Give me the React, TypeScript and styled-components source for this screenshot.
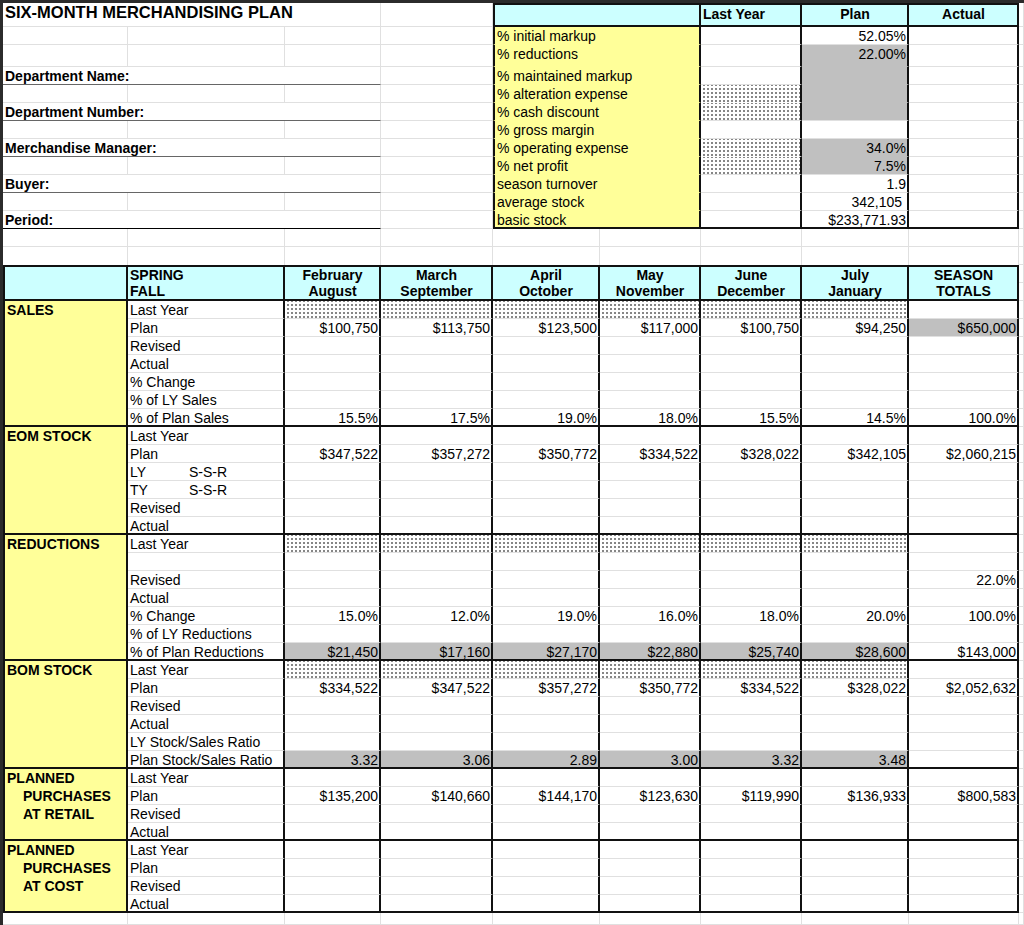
import React from "react";
import styled, { createGlobalStyle } from "styled-components";

const Global = createGlobalStyle`
  html, body { margin: 0; padding: 0; background: #fff; }
  body { font-family: "Liberation Sans", Arial, sans-serif; font-size: 14px; color: #000; }
`;

const GRID = "#e0e0e0";
const THICK = "2px solid #111";
const CYAN = "#ccffff";
const YELLOW = "#ffff99";
const GRAY = "#c0c0c0";

const COLS = [125, 157, 96, 112, 107, 101, 101, 107, 110];
const ROWS: number[] = [24, 18, 22, ...Array(9).fill(18), 18, 18, 18, 18, ...Array(34).fill(18), 12];

const Frame = styled.div`
  border-top: 3px solid #2b2b2b;
  border-left: 3px solid #2b2b2b;
  width: 1021px;
  height: 922px;
  overflow: hidden;
`;

const Sheet = styled.div`
  display: grid;
  grid-template-columns: ${COLS.map((c) => c + "px").join(" ")} 1fr;
  grid-template-rows: ${ROWS.map((r) => r + "px").join(" ")};
`;

type CP = {
  $r: number; $c: number; $rs?: number; $cs?: number;
  $bg?: string; $align?: string; $bold?: boolean; $size?: number;
  $bt?: string; $bb?: string; $bl?: string; $br?: string; $stip?: boolean; $tall?: boolean;
};

const Cell = styled.div<CP>`
  box-sizing: border-box;
  grid-row: ${(p) => p.$r + 1} / span ${(p) => p.$rs || 1};
  grid-column: ${(p) => p.$c + 1} / span ${(p) => p.$cs || 1};
  border-right: ${(p) => p.$br || `1px solid ${GRID}`};
  border-bottom: ${(p) => p.$bb || `1px solid ${GRID}`};
  border-top: ${(p) => p.$bt || "none"};
  border-left: ${(p) => p.$bl || "none"};
  background-color: ${(p) => p.$bg || "transparent"};
  ${(p) => p.$stip ? `background-image: radial-gradient(circle, #000 0.55px, transparent 0.85px); background-size: 4px 4px; background-position: 1px 2px;` : ""}
  font-weight: ${(p) => (p.$bold ? 700 : 400)};
  font-size: ${(p) => p.$size || 14}px;
  text-align: ${(p) => p.$align || "left"};
  line-height: ${(p) => (p.$tall ? 16 : 18)}px;
  padding: 0 1px 0 2px;
  white-space: pre;
  overflow: hidden;
`;

const Line = styled.div<{ $indent?: number }>`
  padding-left: ${(p) => p.$indent || 0}px;
`;

const Pair = styled.span`
  display: inline-block;
  width: 59px;
`;

type Spec = Omit<CP, "$r" | "$c"> & { r: number; c: number; text?: React.ReactNode };

const cells: Spec[] = [];
const add = (s: Spec) => cells.push(s);

// ---- top section ----
add({ r: 0, c: 0, $cs: 3, text: "SIX-MONTH MERCHANDISING PLAN", $bold: true, $size: 16.5 });
const leftLabels: [number, string][] = [
  [3, "Department Name:"], [5, "Department Number:"], [7, "Merchandise Manager:"], [9, "Buyer:"], [11, "Period:"],
];
leftLabels.forEach(([r, t]) =>
  add({ r, c: 0, $cs: 3, text: t, $bold: true, $bb: r === 11 ? "1px solid #000" : "1px solid #666" })
);

add({ r: 0, c: 4, $cs: 2, $bg: CYAN, $bt: THICK, $bl: THICK, $br: THICK, $bb: THICK });
add({ r: 0, c: 6, $bg: CYAN, $bt: THICK, $br: THICK, $bb: THICK, $bold: true, text: "Last Year" });
add({ r: 0, c: 7, $bg: CYAN, $bt: THICK, $br: THICK, $bb: THICK, $bold: true, $align: "center", text: "Plan" });
add({ r: 0, c: 8, $bg: CYAN, $bt: THICK, $br: THICK, $bb: THICK, $bold: true, $align: "center", text: "Actual" });

const topLabels = [
  "% initial markup", "% reductions", "% maintained markup", "% alteration expense", "% cash discount",
  "% gross margin", "% operating expense", "% net profit", "season turnover", "average stock", "basic stock",
];
const planVals: [string, boolean][] = [
  ["52.05%", false], ["22.00%", true], ["", true], ["", true], ["", true], ["", false],
  ["34.0%", true], ["7.5%", true], ["1.9", false], ["342,105 ", false], ["$233,771.93", false],
];
const lyStip = [3, 4, 6, 7];
topLabels.forEach((t, i) => {
  const r = i + 1;
  const last = r === 11;
  const bb = last ? THICK : `1px solid ${YELLOW}`;
  add({ r, c: 4, $cs: 2, $bg: YELLOW, $bl: THICK, $br: THICK, $bb: bb, text: t });
  add({ r, c: 6, $br: THICK, $bb: last ? THICK : `1px solid ${lyStip.includes(i) && lyStip.includes(i + 1) ? "#fff" : GRID}`, $stip: lyStip.includes(i) });
  const [v, g] = planVals[i];
  add({ r, c: 7, $br: THICK, $bb: last ? THICK : `1px solid ${g && planVals[i + 1]?.[1] ? GRAY : GRID}`, $bg: g ? GRAY : undefined, $align: "right", text: v });
  add({ r, c: 8, $br: THICK, $bb: last ? THICK : undefined });
});

// ---- bottom table ----
const H = 14;
const months = [
  ["February", "August"], ["March", "September"], ["April", "October"], ["May", "November"],
  ["June", "December"], ["July", "January"], ["SEASON", "TOTALS"],
];
add({ r: H, c: 0, $rs: 2, $bg: CYAN, $bt: THICK, $bl: THICK, $br: THICK, $bb: THICK });
add({ r: H, c: 1, $rs: 2, $bg: CYAN, $bt: THICK, $br: THICK, $bb: THICK, $bold: true, $tall: true, text: "SPRING\nFALL" });
months.forEach(([a, b], i) =>
  add({ r: H, c: 2 + i, $rs: 2, $bg: CYAN, $bt: THICK, $br: THICK, $bb: THICK, $bold: true, $tall: true, $align: "center", text: `${a}\n${b}` })
);
for (let c = 0; c < 9; c++) add({ r: H - 1, c, $bb: "none" });

type RowDef = { label: React.ReactNode; vals?: string[]; stip?: boolean; gray?: boolean; grayTotal?: boolean; total?: string };
type Section = { title: React.ReactNode; rows: RowDef[] };

const v6 = (s: string) => s.split(" ");
const sections: Section[] = [
  {
    title: <Line>SALES</Line>,
    rows: [
      { label: "Last Year", stip: true },
      { label: "Plan", vals: v6("$100,750 $113,750 $123,500 $117,000 $100,750 $94,250"), total: "$650,000", grayTotal: true },
      { label: "Revised" }, { label: "Actual" }, { label: "% Change" }, { label: "% of LY Sales" },
      { label: "% of Plan Sales", vals: v6("15.5% 17.5% 19.0% 18.0% 15.5% 14.5%"), total: "100.0%" },
    ],
  },
  {
    title: <Line>EOM STOCK</Line>,
    rows: [
      { label: "Last Year" },
      { label: "Plan", vals: v6("$347,522 $357,272 $350,772 $334,522 $328,022 $342,105"), total: "$2,060,215" },
      { label: <><Pair>LY</Pair>S-S-R</> },
      { label: <><Pair>TY</Pair>S-S-R</> },
      { label: "Revised" }, { label: "Actual" },
    ],
  },
  {
    title: <Line>REDUCTIONS</Line>,
    rows: [
      { label: "Last Year", stip: true },
      { label: "" },
      { label: "Revised", total: "22.0%" },
      { label: "Actual" },
      { label: "% Change", vals: v6("15.0% 12.0% 19.0% 16.0% 18.0% 20.0%"), total: "100.0%" },
      { label: "% of LY Reductions" },
      { label: "% of Plan Reductions", vals: v6("$21,450 $17,160 $27,170 $22,880 $25,740 $28,600"), total: "$143,000", gray: true },
    ],
  },
  {
    title: <Line>BOM STOCK</Line>,
    rows: [
      { label: "Last Year", stip: true },
      { label: "Plan", vals: v6("$334,522 $347,522 $357,272 $350,772 $334,522 $328,022"), total: "$2,052,632" },
      { label: "Revised" }, { label: "Actual" }, { label: "LY Stock/Sales Ratio" },
      { label: "Plan Stock/Sales Ratio", vals: v6("3.32 3.06 2.89 3.00 3.32 3.48"), gray: true },
    ],
  },
  {
    title: <><Line>PLANNED</Line><Line $indent={16}>PURCHASES</Line><Line $indent={16}>AT RETAIL</Line></>,
    rows: [
      { label: "Last Year" },
      { label: "Plan", vals: v6("$135,200 $140,660 $144,170 $123,630 $119,990 $136,933"), total: "$800,583" },
      { label: "Revised" }, { label: "Actual" },
    ],
  },
  {
    title: <><Line>PLANNED</Line><Line $indent={16}>PURCHASES</Line><Line $indent={16}>AT COST</Line></>,
    rows: [{ label: "Last Year" }, { label: "Plan" }, { label: "Revised" }, { label: "Actual" }],
  },
];

let r = H + 2;
sections.forEach((s) => {
  const n = s.rows.length;
  add({ r, c: 0, $rs: n, $bg: YELLOW, $bl: THICK, $br: THICK, $bb: THICK, $bold: true, text: s.title });
  s.rows.forEach((row, i) => {
    const last = i === n - 1;
    const bb = last ? THICK : undefined;
    add({ r: r + i, c: 1, $br: THICK, $bb: bb, text: row.label });
    for (let k = 0; k < 6; k++) {
      add({
        r: r + i, c: 2 + k, $br: THICK, $bb: bb, $align: "right",
        $stip: row.stip, $bg: row.gray ? GRAY : undefined,
        text: row.vals ? row.vals[k] : "",
      });
    }
    add({ r: r + i, c: 8, $br: THICK, $bb: bb, $align: "right", $bg: row.grayTotal ? GRAY : undefined, text: row.total || "" });
  });
  r += n;
});

// merge specs per origin, then fill remaining grid cells so gridlines show
const byKey = new Map<string, Spec>();
cells.forEach((s) => {
  const key = `${s.r}-${s.c}`;
  const prev = byKey.get(key);
  byKey.set(key, prev ? { ...prev, ...s } : s);
});
const occupied = new Set<string>();
const final: Spec[] = [];
byKey.forEach((s) => {
  final.push(s);
  for (let i = 0; i < (s.$rs || 1); i++)
    for (let j = 0; j < (s.$cs || 1); j++) occupied.add(`${s.r + i}-${s.c + j}`);
});
for (let i = 0; i < ROWS.length; i++)
  for (let j = 0; j < 10; j++)
    if (!occupied.has(`${i}-${j}`)) final.push({ r: i, c: j });

export default function App() {
  return (
    <>
      <Global />
      <Frame>
        <Sheet>
          {final.map(({ r, c, text, ...p }) => (
            <Cell key={`${r}-${c}`} $r={r} $c={c} {...p}>
              {text}
            </Cell>
          ))}
        </Sheet>
      </Frame>
    </>
  );
}
